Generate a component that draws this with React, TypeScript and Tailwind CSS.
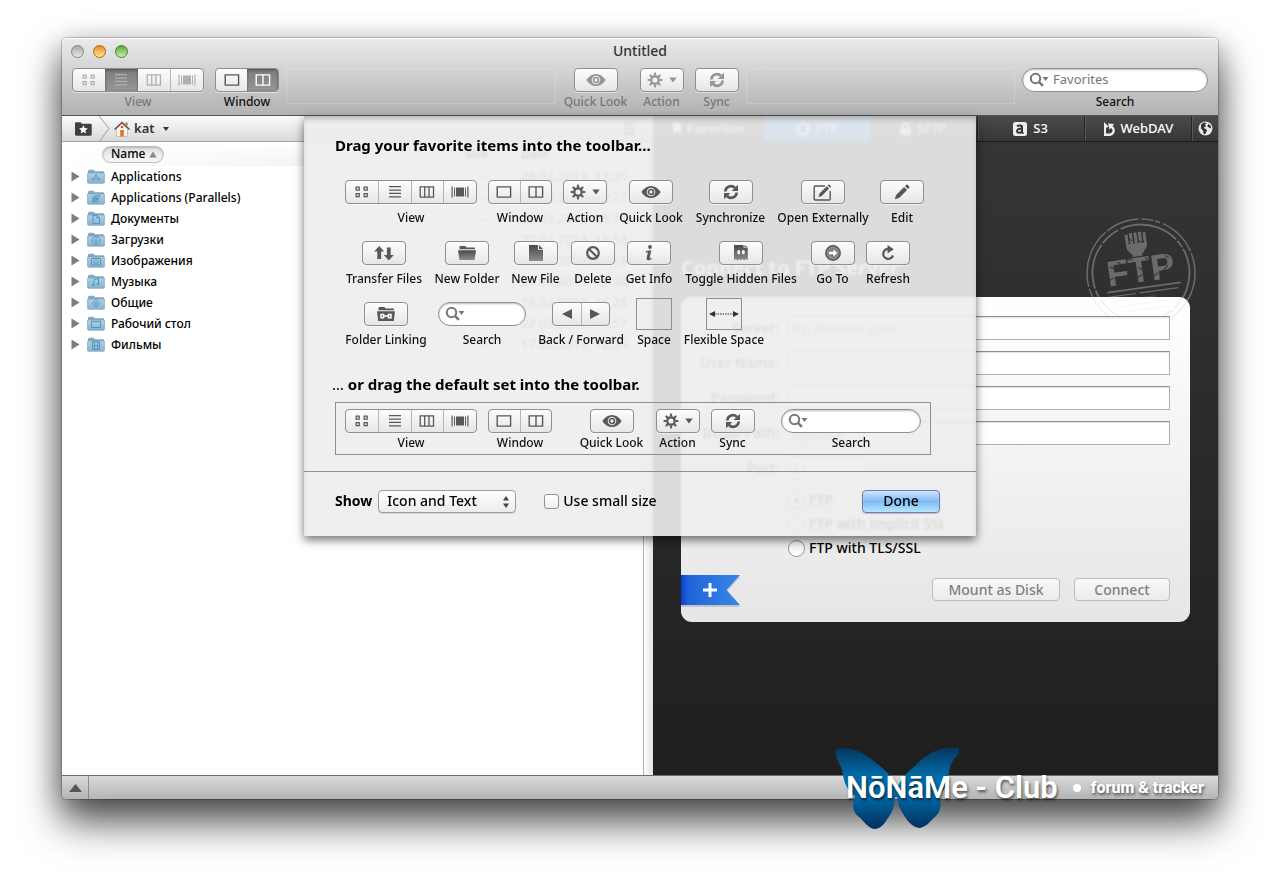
import type { ReactNode } from "react";

const FACE =
  "border border-[#8f8f8f] bg-linear-to-b from-[#fdfdfd] to-[#e6e6e6] rounded-[4px] shadow-[0_1px_0_rgba(255,255,255,0.5)]";

function Svg({ w = 18, h = 16, children }: { w?: number; h?: number; children: ReactNode }) {
  return (
    <svg width={w} height={h} viewBox={`0 0 ${w} ${h}`} fill="currentColor" aria-hidden="true" className="shrink-0">
      {children}
    </svg>
  );
}

const GridIcon = () => (
  <Svg w={14} h={12}>
    <path fill="none" stroke="currentColor" strokeWidth="1.3" d="M1.2 1.2h3v3h-3zM9.2 1.2h3v3h-3zM1.2 7.7h3v3h-3zM9.2 7.7h3v3h-3z" />
  </Svg>
);
const ListIcon = () => (
  <Svg w={14} h={12}>
    <path d="M1 0h12v1.300H1zM1 3.400h12v1.300H1zM1 6.800h12v1.300H1zM1 10.200h12v1.300H1z" />
  </Svg>
);
const ColumnsIcon = () => (
  <Svg w={16} h={12}>
    <path fill="none" stroke="currentColor" strokeWidth="1.300" d="M1.200.9h13.300v10.200H1.200zM5.700.9v10.200M10 .9v10.200" />
  </Svg>
);
const FlowIcon = () => (
  <Svg w={18} h={12}>
    <path d="M.5.500h1.200v11H.5zM3 1.500h1v9H3zM5 1.500h8v9H5zM14 1.500h1v9h-1zM16.300.500h1.200v11h-1.200z" />
  </Svg>
);
const SingleIcon = () => (
  <Svg w={16} h={12}>
    <path fill="none" stroke="currentColor" strokeWidth="1.400" d="M1.200.9h13.400v10.200H1.200z" />
  </Svg>
);
const DualIcon = () => (
  <Svg w={16} h={12}>
    <path fill="none" stroke="currentColor" strokeWidth="1.400" d="M1.200.9h13.400v10.200H1.200zM8 .9v10.200" />
  </Svg>
);
const EyeIcon = () => (
  <Svg w={20} h={14}>
    <path fillRule="evenodd" d="M.3 7C3 3 6.300 1 10 1s7 2 9.700 6c-2.700 4-6 6-9.700 6S3 11 .3 7zM10 2.700a4.300 4.300 0 1 0 0 8.600 4.300 4.300 0 0 0 0-8.600z" />
    <circle cx="10" cy="7" r="2.500" fill="none" stroke="currentColor" strokeWidth="1.700" />
  </Svg>
);
const GearIcon = () => (
  <Svg w={16} h={16}>
    <circle cx="8" cy="8" r="3.700" fill="none" stroke="currentColor" strokeWidth="2.200" />
    {[0, 45, 90, 135, 180, 225, 270, 315].map((a) => (
      <path key={a} d="M7.200.5h1.600l.5 3H6.700z" transform={`rotate(${a} 8 8)`} />
    ))}
  </Svg>
);
const CaretIcon = () => (
  <Svg w={8} h={6}>
    <path d="M.3.500h7.400L4 5.500z" />
  </Svg>
);
const SyncIcon = () => (
  <Svg w={16} h={16}>
    <path fill="none" stroke="currentColor" strokeWidth="2.600" d="M2.300 7.500A5.600 5.600 0 0 1 12 4M13.700 8.500A5.600 5.600 0 0 1 4 12" />
    <path d="M15 .8v6.200H8.700zM1 15.200V9h6.300z" />
  </Svg>
);
const EditIcon = () => (
  <Svg w={16} h={16}>
    <path d="M.8 15.200l1.300-4.300 8-8 3 3-8 8zM10.900 2.100l1.200-1.200c.5-.5 1.200-.5 1.700 0l1.300 1.300c.5.500.5 1.200 0 1.700l-1.200 1.200z" />
  </Svg>
);
const OpenExternalIcon = () => (
  <Svg w={20} h={17}>
    <path fill="none" stroke="currentColor" strokeWidth="1.400" d="M12 2H2.200a1 1 0 0 0-1 1v12a1 1 0 0 0 1 1h14a1 1 0 0 0 1-1V7" />
    <path d="M5.500 13l1-3.500 7.300-7.300 2.300 2.300L8.800 12zM14.600 1.400l1.200-1.200 2.400 2.300L17 3.700z" />
  </Svg>
);
const TransferIcon = () => (
  <Svg w={20} h={16}>
    <path d="M5.200 1l5 5.500H7.100V14H3.300V6.500H.2zM14.800 15.500l5-5.500h-3.100V2.500h-3.800V10H9.800z" />
  </Svg>
);
const FolderIcon = () => (
  <Svg w={18} h={16}>
    <path d="M1.500 2.200c0-.7.400-1.200 1.200-1.200h4.600l1.300 1.500h7.200c.7 0 1.200.4 1.200 1v.7H1.500z" />
    <path fill="url(#soft)" d="M0 5.300h18L16.600 15H1.400z" />
  </Svg>
);
const FileIcon = () => (
  <Svg w={14} h={16}>
    <path fill="url(#soft)" d="M0 0h9v4.800h5V16H0z" />
    <path d="M10 0l4 3.900h-4z" />
  </Svg>
);
const DeleteIcon = () => (
  <Svg w={16} h={16}>
    <circle cx="8" cy="8" r="5.800" fill="none" stroke="currentColor" strokeWidth="2.200" />
    <path stroke="currentColor" strokeWidth="2.200" d="M4 4l8 8" />
  </Svg>
);
const InfoIcon = () => (
  <Svg w={10} h={16}>
    <circle cx="6" cy="2" r="1.900" />
    <path d="M2 6l5.300-.8-1.500 7.300c-.2 1 .5 1.200 2 .2l-.3 1.200C5.200 15.900 2 15.900 2.700 12.800L3.900 7.500 1.700 7.200z" />
  </Svg>
);
const GhostIcon = () => (
  <Svg w={14} h={16}>
    <path fillRule="evenodd" fill="url(#soft)" d="M0 0h9.500v2.500h4.300V15.500l-1.800-1.500-1.700 1.500L8.600 14l-1.700 1.500L5.200 14l-1.700 1.500L1.800 14 0 15.500zM4.700 5a1.500 2.200 0 1 0 .1 4.400A1.500 2.200 0 0 0 4.700 5zM9.300 5a1.500 2.200 0 1 0 .1 4.400A1.500 2.200 0 0 0 9.300 5z" />
    <path d="M10.500 0l3.300 1.700h-3.300z" />
  </Svg>
);
const GoIcon = () => (
  <Svg w={16} h={16}>
    <circle cx="8" cy="8" r="7.200" fill="#8a8a8a" stroke="currentColor" strokeWidth="1.500" />
    <path fill="#fff" stroke="currentColor" strokeWidth=".6" d="M3.500 6.300H8V3.500L12.800 8 8 12.500V9.700H3.500z" />
  </Svg>
);
const RefreshIcon = () => (
  <Svg w={14} h={16}>
    <path fill="none" stroke="currentColor" strokeWidth="2.300" d="M8.500 4A5 5 0 1 0 12 10.500" />
    <path d="M6.500 0l6.300 4.300L6.500 8.500z" />
  </Svg>
);
const LinkFolderIcon = () => (
  <Svg w={18} h={16}>
    <path d="M1.500 2.200c0-.7.400-1.200 1.200-1.200h4.600l1.300 1.500h7.200c.7 0 1.200.4 1.200 1v.7H1.500zM0 5.300h18L16.800 15H1.200z" />
    <path fill="none" stroke="#fff" strokeWidth="1.500" d="M4 8.500h2.600v3.200H4zM11.400 8.500H14v3.200h-2.600zM6.500 10.100h5" />
  </Svg>
);
const SearchIcon = () => (
  <Svg w={22} h={16}>
    <circle cx="6.500" cy="6.500" r="4.700" fill="none" stroke="currentColor" strokeWidth="2" />
    <path stroke="currentColor" strokeWidth="2.600" d="M9.900 9.900l4 4" />
    <path d="M13.500 5h6L16.500 9z" />
  </Svg>
);

type Part = { name: string; icon: ReactNode; on?: boolean; dim?: boolean; rule?: boolean };

function Segments({ parts, label }: { parts: Part[]; label: string }) {
  return (
    <div role="group" aria-label={label} className={`flex h-6 w-full overflow-hidden ${FACE}`}>
      {parts.map((p) => (
        <button
          key={p.name}
          aria-label={p.name}
          className={`flex flex-1 items-center justify-center ${
            p.on ? "bg-linear-to-b from-[#7c7c7c] to-[#969696] shadow-[inset_0_1px_3px_rgba(0,0,0,0.4)]" : ""
          } ${p.rule ? "border-l border-[#b5b5b5]" : ""} ${p.dim ? "text-[#b0b0b0]" : p.on ? "text-white" : "text-[#585858]"}`}
        >
          {p.icon}
        </button>
      ))}
    </div>
  );
}

function Push({ label, children, dim }: { label: string; children: ReactNode; dim?: boolean }) {
  return (
    <button
      aria-label={label}
      className={`flex h-6 w-11 items-center justify-center gap-1.5 ${FACE} ${dim ? "text-[#959595]" : "text-[#585858]"}`}
    >
      {children}
    </button>
  );
}

function SearchField({ placeholder, label }: { placeholder?: string; label: string }) {
  return (
    <div className="flex h-6 w-full items-center rounded-full border border-[#8f8f8f] bg-white pl-1.5 text-[#777] shadow-[inset_0_1px_2px_rgba(0,0,0,0.25)]">
      <SearchIcon />
      <input
        type="search"
        aria-label={label}
        placeholder={placeholder}
        className="ml-0.5 w-0 min-w-0 flex-1 bg-transparent text-[13px] outline-none placeholder:text-[#777]"
      />
    </div>
  );
}

function Item({ label, width, children, tall, dim }: { label: string; width: string; children: ReactNode; tall?: boolean; dim?: boolean }) {
  return (
    <div className={`flex shrink-0 flex-col items-center ${tall ? "" : "gap-0.5"} ${width}`}>
      <div className={`flex w-full items-center justify-center ${tall ? "h-9" : "h-6"}`}>{children}</div>
      <span className={`text-xs leading-4 font-medium whitespace-nowrap ${dim ? "text-[#777]" : "text-[#111]"}`}>{label}</span>
    </div>
  );
}

const viewParts: Part[] = [
  { name: "Icons", icon: <GridIcon /> },
  { name: "List", icon: <ListIcon />, rule: true },
  { name: "Columns", icon: <ColumnsIcon />, rule: true },
  { name: "Cover flow", icon: <FlowIcon />, rule: true },
];
const windowParts: Part[] = [
  { name: "Single pane", icon: <SingleIcon /> },
  { name: "Dual pane", icon: <DualIcon />, rule: true },
];
const activeView: Part[] = viewParts.map((p) => ({ ...p, dim: true, on: p.name === "List", rule: p.name === "Cover flow" }));
const activeWindow: Part[] = windowParts.map((p) => ({ ...p, rule: false, on: p.name === "Dual pane" }));

const Gear = () => (
  <>
    <GearIcon />
    <CaretIcon />
  </>
);

function Header() {
  const light = "size-[13px] rounded-full border";
  return (
    <header className="rounded-t-[5px] border-b border-[#515151] bg-linear-to-b from-[#ebebeb] to-[#b2b2b2] shadow-[inset_0_1px_0_#fff]">
      <div className="relative flex h-[26px] items-center justify-center">
        <div className="absolute left-[9px] flex gap-[9px]">
          <button aria-label="Close" className={`${light} border-[#858585] bg-linear-to-b from-[#a9a9a9] to-[#e8e8e8]`} />
          <button aria-label="Minimize" className={`${light} border-[#a86a1b] bg-linear-to-b from-[#e8891c] to-[#ffe48a]`} />
          <button aria-label="Zoom" className={`${light} border-[#4a8035] bg-linear-to-b from-[#55a93f] to-[#c9f39c]`} />
        </div>
        <h1 className="text-sm font-medium text-[#333]">Untitled</h1>
      </div>
      <div className="flex gap-[11px] px-2.5 pt-1 pb-[5px]">
        <Item label="View" width="w-[132px]" dim>
          <Segments parts={activeView} label="View" />
        </Item>
        <Item label="Window" width="w-16">
          <Segments parts={activeWindow} label="Window" />
        </Item>
        <div className="-mx-1 h-9 flex-1 border border-white/20" />
        <Item label="Quick Look" width="w-[66px]" dim>
          <Push label="Quick Look" dim><EyeIcon /></Push>
        </Item>
        <Item label="Action" width="w-11" dim>
          <Push label="Action" dim><Gear /></Push>
        </Item>
        <Item label="Sync" width="w-11" dim>
          <Push label="Sync" dim><SyncIcon /></Push>
        </Item>
        <div className="-mx-1 h-9 flex-1 border border-white/20" />
        <Item label="Search" width="w-[186px]">
          <SearchField placeholder="Favorites" label="Search" />
        </Item>
      </div>
    </header>
  );
}

const files = [
  ["Applications", "28.02.2013, 13:35", "M5.500 11.500l3.500-6 3.500 6M4.500 10h9"],
  ["Applications (Parallels)", "01.03.2013, 10:27", "M6 6.500l2.500-.7v2.500L5.500 9zM9.500 5.700l3-.5-.7 3-2.500.3zM5.500 10l2.700-.5-.4 2.200-2.500.6zM9 9.500l2.600-.4-.5 2.400-2.400.4z"],
  ["Документы", "22.03.2013, 18:31", "M6 4.500h4l2.500 2.500v5.500H6zM10 4.500V7h2.500"],
  ["Загрузки", "22.03.2013, 18:53", "M9 4.500a4 4 0 1 0 .1 0M9 6v4M7 8.500l2 2 2-2"],
  ["Изображения", "16.03.2013, 15:18", "M4.500 5.500h9v6.500h-9zM9 6.800a2 2 0 1 0 .1 0"],
  ["Музыка", "21.03.2013, 19:34", "M7 11V5.500l4.500-1V10M6.300 10.300a.8.800 0 1 0 .1 0M10.800 9.500a.8.800 0 1 0 .1 0"],
  ["Общие", "18.02.2013, 16:28", "M9 4.500L12.700 8.300 9 12 5.300 8.300zM9 7v2.600M7.700 8.300h2.600"],
  ["Рабочий стол", "22.03.2013, 18:57", "M4.500 5.500h9v6h-9zM5.500 11.500v1M12.500 11.500v1"],
  ["Фильмы", "17.02.2013, 12:35", "M5.500 4.800h7v7.500h-7zM7.300 4.800v7.500M10.700 4.800v7.500M7.300 8.500h3.400"],
];

function FilePane() {
  return (
    <section aria-label="Local files" className="flex min-w-0 flex-1 flex-col bg-white">
      <nav aria-label="Path" className="flex h-[26px] shrink-0 items-center border-b border-[#a5a5a5] bg-linear-to-b from-[#fbfbfb] to-[#d9d9d9] pl-[13px] text-[13px] font-semibold text-[#333]">
        <svg width="17" height="14" viewBox="0 0 17 14" aria-hidden="true">
          <path fill="#3f3f3f" d="M0 1.500C0 .7.500.3 1.200.3h4.500l1.200 1.400h8.500c.8 0 1.300.5 1.300 1.200V12.500c0 .8-.5 1.200-1.200 1.200H1.200C.5 13.700 0 13.300 0 12.500z" />
          <path fill="#fff" d="M8.400 3.200l1.300 2.900 3.100.3-2.400 2.100.7 3.100-2.700-1.600-2.700 1.600.7-3.100L4 6.400l3.100-.3z" />
        </svg>
        <svg width="12" height="26" viewBox="0 0 12 26" className="mr-1 ml-1.5" aria-hidden="true">
          <path d="M1 0l10 12.500L1 26" fill="none" stroke="#9c9c9c" />
        </svg>
        <svg width="16" height="16" viewBox="0 0 16 16" aria-hidden="true">
          <path fill="#7b7b7b" d="M11.500 1.500h2v3h-2z" />
          <path fill="#fbf7ee" stroke="#b9a48e" strokeWidth=".6" d="M2.500 7.500L8 2.500l5.500 5v8h-11z" />
          <path fill="none" stroke="#6d4b34" strokeWidth="1.500" d="M.5 8.500L8 1.500l7.500 7" />
          <path fill="#e0762a" d="M6.200 9h3.600v6.500H6.200z" />
          <circle cx="8" cy="6" r="1.300" fill="#c7572a" />
        </svg>
        <button className="ml-1 flex items-center gap-2">
          kat
          <svg width="6" height="4" viewBox="0 0 6 4" fill="#333" aria-hidden="true"><path d="M0 0h6L3 4z" /></svg>
        </button>
        <svg width="11" height="13" viewBox="0 0 11 13" fill="#777" className="mr-[18px] ml-auto" aria-hidden="true">
          <path d="M0 0h11v3H0zM0 5h11v3H0zM0 10h11v3H0z" />
        </svg>
      </nav>
      <div className="flex min-h-0 flex-1">
        <div className="flex-1">
          <table className="w-full table-fixed text-[13px] text-black">
            <thead>
              <tr className="h-6 bg-linear-to-b from-white to-[#ececec] text-left">
                <th className="bg-linear-to-r from-white to-transparent p-0 pl-10 font-medium">
                  <button className="flex h-[17px] items-center gap-1 rounded-full border border-[#bdbdbd] bg-linear-to-b from-[#e0e0e0] to-[#f8f8f8] pr-1.5 pl-2 text-xs font-medium shadow-[inset_0_1px_2px_rgba(0,0,0,0.2)]">
                    Name
                    <svg width="8" height="7" viewBox="0 0 8 7" fill="#888" aria-hidden="true"><path d="M4 .5L7.700 6.500H.3z" /></svg>
                  </button>
                </th>
                <th className="w-[71px] p-0 pr-[23px] text-right text-xs font-medium">Size</th>
                <th className="w-[132px] p-0 pl-2.5 text-xs font-medium">Date</th>
              </tr>
            </thead>
            <tbody>
              {files.map(([name, date, glyph]) => (
                <tr key={name} className="h-[21px]">
                  <td className="p-0 pl-[9px]">
                    <div className="flex items-center">
                      <svg width="9" height="11" viewBox="0 0 9 11" fill="#7d7d7d" aria-hidden="true"><path d="M.5.500v10L8.500 5.500z" /></svg>
                      <svg width="18" height="15" viewBox="0 0 18 15" className="mr-1.5 ml-[7px]" aria-hidden="true">
                        <path fill="#7fa9c6" d="M1 2.500C1 1.500 1.500.8 2.300.8h4.200L8 2.300h8c.6 0 1 .4 1 1V6H1z" />
                        <path fill="url(#folder)" stroke="#78a5c2" strokeWidth=".7" d="M.6 4h16.800v9.500c0 .5-.3.800-.8.800H1.400c-.5 0-.8-.3-.8-.8z" />
                        <path fill="none" stroke="#5f93b5" strokeWidth="1" d={glyph} />
                      </svg>
                      <span className="text-xs leading-5 font-medium whitespace-nowrap">{name}</span>
                    </div>
                  </td>
                  <td className="p-0 pr-[23px] text-right text-[#444]">--</td>
                  <td className="p-0 pl-2.5 text-[13px] whitespace-nowrap text-[#444]">{date}</td>
                </tr>
              ))}
            </tbody>
          </table>
        </div>
        <div className="w-2.5 shrink-0 border-l border-[#b5b5b5] bg-linear-to-r from-white to-[#e2e2e2]" />
      </div>
    </section>
  );
}

function TextRow({ id, label, placeholder, short }: { id: string; label: string; placeholder?: string; short?: boolean }) {
  return (
    <div className="flex h-6 items-center gap-2">
      <label htmlFor={id} className="w-[98px] shrink-0 text-right text-sm font-medium text-[#333]">{label}</label>
      <input
        id={id}
        placeholder={placeholder}
        type={id === "password" ? "password" : "text"}
        className={`h-6 border border-[#b0b0b0] border-t-[#8e8e8e] bg-white px-1 text-sm shadow-[inset_0_1px_1px_rgba(0,0,0,0.12)] placeholder:text-[#888] ${short ? "w-20" : "min-w-0 flex-1"}`}
      />
    </div>
  );
}

function Stamp() {
  return (
    <svg width="112" height="112" viewBox="-56 -56 112 112" className="absolute -top-20 -right-[7px] opacity-35" aria-hidden="true">
      <g transform="rotate(-8)" fill="#d8d8d8" stroke="none">
        <circle r="54" fill="none" stroke="#d8d8d8" strokeWidth="1.500" strokeDasharray="60 2 34 3 12 2 5 3 40 2" />
        <circle r="48.500" fill="none" stroke="#d8d8d8" strokeWidth="1.800" strokeDasharray="46 2 20 3 60 2 8 2" />
        <path d="M-11-40h3v10h1.500v-11h3v11h1.500v-11h3v11h1.500v-11h3v11H7v-10h3v12c0 3-2 5-4 6v2H4v3H-6v-3h-2v-2c-2-1-3-3-3-6z" />
        <text y="9" textAnchor="middle" fontFamily="Liberation Sans, sans-serif" fontWeight="700" fontSize="36">FTP</text>
        <path d="M-36 14h74v1.600h-74zM-36 19h28v1.200h-28zM-4 19h39v1.200H-4z" />
        <path opacity=".6" d="M-33 24h44v1h-44zM-28 30h50v1h-50zM-20 36h43v1h-43z" />
        <path stroke="#383838" strokeWidth="1" d="M-30-10l6 3M-14-16l8 2M6-15l5 5M22 1l6-5M-2-6l4 3M26-14l4 3M-32 3l5-2M-4 4l5-2M-8-36l4 3M2-32l5 2M-22-14l3 2M12 5l5-3" fill="none" />
      </g>
    </svg>
  );
}

function ServerPane() {
  const tab = "flex h-full items-center justify-center gap-1.5 text-[13px] font-medium text-white";
  const edge = "border-l border-[#262626] shadow-[inset_1px_0_0_#585858]";
  const push = "h-[23px] rounded-[4px] border border-[#bcbcbc] bg-linear-to-b from-[#f8f8f8] to-[#ebebeb] text-sm leading-5 font-medium text-[#808080]";
  return (
    <section aria-label="Server" className="flex w-[565px] shrink-0 flex-col bg-linear-to-b from-[#363636] to-[#1f1f1f]">
      <nav aria-label="Protocol" className="flex h-[26px] shrink-0 border-b border-[#1c1c1c] bg-linear-to-b from-[#4b4b4b] to-[#363636]">
        <button className={`${tab} w-[111px]`}>
          <svg width="8" height="11" viewBox="0 0 8 11" fill="#fff" aria-hidden="true"><path d="M0 0h8v11L4 8l-4 3z" /></svg>
          Favorites
        </button>
        <button className={`${tab} flex-1 bg-[#2a87d8]`}>
          <svg width="14" height="14" viewBox="0 0 14 14" aria-hidden="true"><circle cx="7" cy="7" r="5.500" fill="none" stroke="#fff" strokeWidth="2.500" /></svg>
          FTP
        </button>
        <button className={`${tab} flex-1`}>
          <svg width="11" height="13" viewBox="0 0 11 13" aria-hidden="true"><path fill="#fff" d="M0 6h11v7H0z" /><path d="M2.500 6V4a3 3 0 0 1 6 0v2" fill="none" stroke="#fff" strokeWidth="2" /></svg>
          SFTP
        </button>
        <button className={`${tab} ${edge} flex-1`}>
          <svg width="14" height="14" viewBox="0 0 14 14" aria-hidden="true">
            <rect width="14" height="14" rx="2.500" fill="#eee" />
            <path fill="none" stroke="#333" strokeWidth="2" d="M4 4.300c1.500-1.200 5-1.200 5 .8v5c0 .8.500 1 1.500.8M9 6.500c-3 0-5 .5-5 2.500s3.500 2.500 5 0" />
          </svg>
          S3
        </button>
        <button className={`${tab} ${edge} flex-1`}>
          <svg width="12" height="14" viewBox="0 0 12 14" aria-hidden="true">
            <path fill="#eee" d="M1 0l4.500 4.500L3 6v5.500h3c4 0 4.500-4 2-5.500L6.500 7.500 5 1.500l6 .5-1.500 2C14 7.500 11.500 14 6 14H1z" />
          </svg>
          WebDAV
        </button>
        <button aria-label="Web" className={`${tab} ${edge} w-[27px]`}>
          <svg width="15" height="15" viewBox="0 0 15 15" aria-hidden="true">
            <circle cx="7.500" cy="7.500" r="7" fill="#e8e8e8" />
            <path fill="#333" d="M3 3.500l3-2 2.500.5L7 3.500l1 1.500-2.500 2 2.500 1 1 1.500-2 4-1.500-1-.5-3-2-2zM10 3l2.500 1.500.8 3-1.800-.8-2-1z" />
          </svg>
        </button>
      </nav>
      <form className="px-7" onSubmit={(e) => e.preventDefault()}>
        <h2 className="mt-28 mb-[15px] text-xl leading-7 font-bold text-white">Connect to FTP Server</h2>
        <div className="relative rounded-[11px] bg-linear-to-b from-white to-[#e6e6e6] pt-[19px] pr-5 pb-[21px]">
          <Stamp />
          <div className="relative flex flex-col gap-[11px]">
            <TextRow id="server" label="Server:" placeholder="ftp.domain.com" />
            <TextRow id="user" label="User Name:" />
            <TextRow id="password" label="Password:" />
            <TextRow id="path" label="Initial Path:" placeholder="optional" />
            <TextRow id="port" label="Port:" placeholder="21" short />
          </div>
          <div className="mt-2 flex flex-col pl-[107px]">
            {["FTP", "FTP with Implicit SSL", "FTP with TLS/SSL"].map((name) => (
              <label key={name} className="flex h-6 items-center gap-1 text-sm font-medium text-black">
                <input
                  type="radio"
                  name="mode"
                  defaultChecked={name === "FTP"}
                  className="size-[17px] appearance-none rounded-full border border-[#929292] bg-linear-to-b from-[#ededed] to-white checked:shadow-[inset_0_0_0_5px_#f2f2f2] checked:[background:#444]"
                />
                {name}
              </label>
            ))}
          </div>
          <div className="mt-[18px] flex justify-end gap-3.5">
            <button className={`${push} w-32`}>Mount as Disk</button>
            <button className={`${push} w-24`}>Connect</button>
          </div>
          <button type="button" aria-label="Add favorite" className="absolute bottom-[15px] left-0">
            <svg width="60" height="32" viewBox="0 0 60 32" aria-hidden="true">
              <defs>
                <linearGradient id="ribbon"><stop offset="0" stopColor="#0a3fc9" /><stop offset=".12" stopColor="#1f64da" /><stop offset="1" stopColor="#3a86e4" /></linearGradient>
              </defs>
              <path d="M0 2h59L45.500 17 59 32H0z" fill="#000" opacity=".15" />
              <path d="M0 0h59L45.500 15 59 30H0z" fill="url(#ribbon)" />
              <path d="M22 13.500h5.500V8h3v5.500H36v3h-5.500V22h-3v-5.500H22z" fill="#fff" />
            </svg>
          </button>
        </div>
      </form>
    </section>
  );
}

function CustomizeSheet() {
  return (
    <div
      role="dialog"
      aria-label="Customize toolbar"
      className="absolute top-0 left-1/2 w-[672px] -translate-x-1/2 bg-[#ededed]/91 pt-[19px] shadow-[0_4px_9px_rgba(0,0,0,0.55),inset_0_5px_6px_-3px_rgba(0,0,0,0.3)] backdrop-blur-[1px]"
    >
      <h2 className="pl-[31px] text-[15px] leading-5 font-bold">Drag your favorite items into the toolbar…</h2>
      <div className="mt-[19px] flex flex-col gap-[9px] pl-[41px]">
        <div className="flex gap-[11px]">
          <Item tall label="View" width="w-[132px]"><Segments parts={viewParts} label="View" /></Item>
          <Item tall label="Window" width="w-16"><Segments parts={windowParts} label="Window" /></Item>
          <Item tall label="Action" width="w-11"><Push label="Action"><Gear /></Push></Item>
          <Item tall label="Quick Look" width="w-[66px]"><Push label="Quick Look"><EyeIcon /></Push></Item>
          <Item tall label="Synchronize" width="w-[71px]"><Push label="Synchronize"><SyncIcon /></Push></Item>
          <Item tall label="Open Externally" width="w-[92px]"><Push label="Open Externally"><OpenExternalIcon /></Push></Item>
          <Item tall label="Edit" width="w-11"><Push label="Edit"><EditIcon /></Push></Item>
        </div>
        <div className="flex gap-[11px]">
          <Item tall label="Transfer Files" width="w-[78px]"><Push label="Transfer Files"><TransferIcon /></Push></Item>
          <Item tall label="New Folder" width="w-[66px]"><Push label="New Folder"><FolderIcon /></Push></Item>
          <Item tall label="New File" width="w-[49px]"><Push label="New File"><FileIcon /></Push></Item>
          <Item tall label="Delete" width="w-11"><Push label="Delete"><DeleteIcon /></Push></Item>
          <Item tall label="Get Info" width="w-[46px]"><Push label="Get Info"><InfoIcon /></Push></Item>
          <Item tall label="Toggle Hidden Files" width="w-[116px]"><Push label="Toggle Hidden Files"><GhostIcon /></Push></Item>
          <Item tall label="Go To" width="w-[45px]"><Push label="Go To"><GoIcon /></Push></Item>
          <Item tall label="Refresh" width="w-11"><Push label="Refresh"><RefreshIcon /></Push></Item>
        </div>
        <div className="flex gap-[11px]">
          <Item tall label="Folder Linking" width="w-[82px]"><Push label="Folder Linking"><LinkFolderIcon /></Push></Item>
          <Item tall label="Search" width="w-[88px]"><SearchField label="Search" /></Item>
          <Item tall label="Back / Forward" width="w-[88px]">
            <div className="w-[58px]">
              <Segments
                label="Back / Forward"
                parts={[
                  { name: "Back", icon: <Svg w={10} h={10}><path d="M10 0v10L0 5z" /></Svg> },
                  { name: "Forward", icon: <Svg w={10} h={10}><path d="M0 0v10l10-5z" /></Svg>, rule: true },
                ]}
              />
            </div>
          </Item>
          <Item tall label="Space" width="w-9"><div className="h-8 w-9 border border-[#8f8f8f]" /></Item>
          <Item tall label="Flexible Space" width="w-[82px]">
            <div className="flex h-8 w-9 items-center justify-center border border-[#8f8f8f] text-[#333]">
              <Svg w={30} h={8}>
                <path d="M0 4l6-3v6zM30 4l-6-3v6z" />
                <path stroke="currentColor" strokeDasharray="1.500 1" d="M6 4h18" />
              </Svg>
            </div>
          </Item>
        </div>
      </div>
      <h2 className="mt-[26px] pl-7 text-[15px] leading-5 font-bold">
        <span className="font-normal">…</span> or drag the default set into the toolbar.
      </h2>
      <div className="mt-2 mr-[45px] ml-[31px] flex gap-[11px] border border-[#8f8f8f] px-[9px] pt-1.5 pb-[3px]">
        <Item label="View" width="w-[132px]"><Segments parts={viewParts} label="View" /></Item>
        <Item label="Window" width="w-16"><Segments parts={windowParts} label="Window" /></Item>
        <div className="flex-1" />
        <Item label="Quick Look" width="w-[66px]"><Push label="Quick Look"><EyeIcon /></Push></Item>
        <Item label="Action" width="w-11"><Push label="Action"><Gear /></Push></Item>
        <Item label="Sync" width="w-11"><Push label="Sync"><SyncIcon /></Push></Item>
        <div className="flex-1" />
        <Item label="Search" width="w-[140px]"><SearchField label="Search" /></Item>
      </div>
      <div className="mt-4 flex h-[65px] items-center border-t border-[#8f8f8f] pr-9 pb-1.5 pl-[31px] text-sm font-medium">
        <label htmlFor="show" className="mr-1.5 font-bold">Show</label>
        <div className="relative">
          <select id="show" className="h-[23px] w-[138px] appearance-none rounded-[4px] border border-[#9a9a9a] bg-linear-to-b from-white to-[#ececec] pl-2 text-sm leading-5 font-medium shadow-[0_1px_0_rgba(0,0,0,0.1)]">
            <option>Icon and Text</option>
            <option>Icon Only</option>
            <option>Text Only</option>
          </select>
          <svg width="6" height="12" viewBox="0 0 6 12" fill="#444" className="pointer-events-none absolute top-1.5 right-[7px]" aria-hidden="true">
            <path d="M3 0l3 4.500H0zM3 12L0 7.500h6z" />
          </svg>
        </div>
        <label className="ml-7 flex items-center gap-1">
          <input type="checkbox" className="size-[15px] appearance-none rounded-[3px] border border-[#929292] bg-linear-to-b from-white to-[#eee] checked:bg-[#8dbdf0]" />
          Use small size
        </label>
        <button className="ml-auto h-[23px] w-[78px] rounded-[4px] border border-[#6c7fa8] bg-linear-to-b from-[#cfe4fb] via-[#7fbaf5] to-[#b5e6ff] leading-5 shadow-[0_1px_1px_rgba(0,0,0,0.2)]">
          Done
        </button>
      </div>
    </div>
  );
}

function ClubBadge() {
  return (
    <div className="absolute right-3.5 -bottom-[30px] flex h-[83px] w-[370px] items-center text-white [text-shadow:1px_2px_3px_rgba(0,0,0,0.6)]">
      <svg width="126" height="83" viewBox="0 0 126 83" className="absolute top-0 left-0" aria-hidden="true">
        <defs>
          <linearGradient id="wing" x2="0" y2="1">
            <stop offset="0" stopColor="#06355f" />
            <stop offset=".38" stopColor="#006fae" />
            <stop offset=".6" stopColor="#0068a6" />
            <stop offset="1" stopColor="#022f5c" />
          </linearGradient>
        </defs>
        <path
          fill="url(#wing)"
          d="M1 4C10-1 26 4 37 13c12 9 20 16 24 25l1 8c2-9 8-17 19-26C92 8 105 0 124 2c2 3 1 6-2 9-5 5-6 9-7 15-1 10-3 17-10 23 2 7 3 15-3 21-5 4-8 10-16 12-8 0-14-9-18-16-4-6-4-11-5-15h-2c0 8-2 14-7 21-3 4-6 11-14 11-6-1-10-8-15-12-7-5-7-13-4-21-7-5-11-13-12-21C8 19 1 13 1 4z"
        />
      </svg>
      <span className="relative ml-3 font-['Roboto',sans-serif] text-[31px] leading-8 font-semibold whitespace-nowrap">NōNāMe - Club</span>
      <span className="relative ml-auto flex items-center gap-2.5 font-['Roboto',sans-serif] text-base font-extrabold whitespace-nowrap">
        <i className="size-2 rounded-full bg-white" />
        forum &amp; tracker
      </span>
    </div>
  );
}

export default function App() {
  return (
    <div className="flex min-h-screen bg-white px-[62px] pt-[38px] pb-[86px] font-['Noto_Sans','Open_Sans',sans-serif]">
      <svg width="0" height="0" className="absolute" aria-hidden="true">
        <defs>
          <linearGradient id="soft" x2="0" y2="1"><stop offset="0" stopColor="#4a4a4a" /><stop offset="1" stopColor="#8c8c8c" /></linearGradient>
          <linearGradient id="folder" x2="0" y2="1"><stop offset="0" stopColor="#aed2e6" /><stop offset="1" stopColor="#85b3d0" /></linearGradient>
        </defs>
      </svg>
      <main className="relative flex min-w-0 flex-1 flex-col rounded-[5px] shadow-[0_0_0_1px_rgba(0,0,0,0.2),0_24px_40px_rgba(0,0,0,0.6),0_8px_30px_rgba(0,0,0,0.35)]">
        <Header />
        <div className="relative flex flex-1">
          <FilePane />
          <ServerPane />
          <CustomizeSheet />
        </div>
        <footer className="flex h-6 items-stretch rounded-b-[5px] border-t border-[#6e6e6e] bg-linear-to-b from-[#dadada] to-[#b4b4b4]">
          <button aria-label="Show activity" className="flex w-[27px] items-center justify-center border-r border-[#8c8c8c]">
            <svg width="13" height="8" viewBox="0 0 13 8" fill="#555" aria-hidden="true"><path d="M6.500 0L13 8H0z" /></svg>
          </button>
        </footer>
        <ClubBadge />
      </main>
    </div>
  );
}
